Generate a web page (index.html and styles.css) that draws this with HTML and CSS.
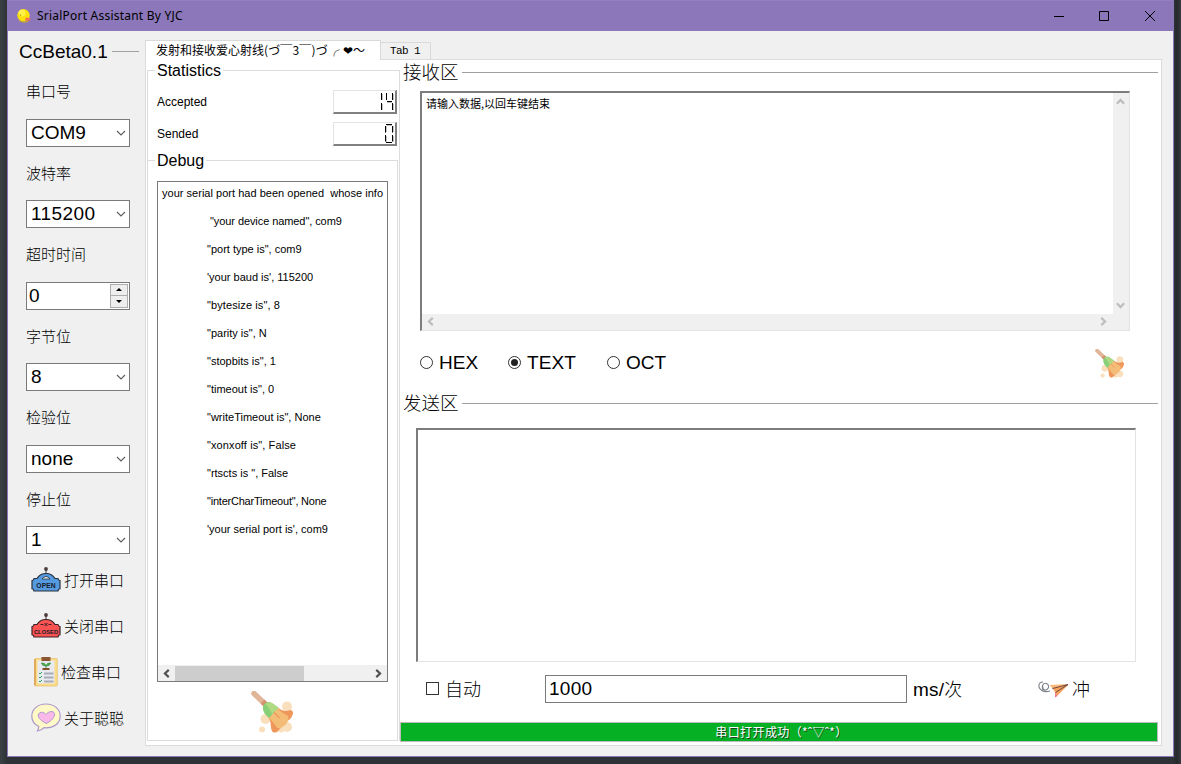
FILE: index.html
```html
<!DOCTYPE html>
<html lang="zh-CN">
<head>
<meta charset="utf-8">
<title>SrialPort Assistant By YJC</title>
<link rel="stylesheet" href="styles.css">
</head>
<body>
<svg width="0" height="0" class="defs" aria-hidden="true">
  <symbol id="chev" viewBox="0 0 10 6"><path d="M1 1l4 4 4-4" fill="none" stroke="#5c5c5c" stroke-width="1.1"/></symbol>
  <symbol id="arrow" viewBox="0 0 8 8"><path d="M6 .8L2.6 4 6 7.2" fill="none" stroke="currentColor" stroke-width="1.9"/></symbol>
  <symbol id="broom" viewBox="0 0 42 42">
    <circle cx="36" cy="15.500" r="5" fill="#fadfbd"/><circle cx="14.500" cy="28" r="5" fill="#fadfbd"/>
    <circle cx="11" cy="38.500" r="3" fill="#fadfbd"/><circle cx="36" cy="36" r="5" fill="#fadfbd"/><circle cx="30" cy="38" r="3.500" fill="#fadfbd"/>
    <path d="M3 2.500L14 13" stroke="#e0b598" stroke-width="5.500" stroke-linecap="round"/>
    <path d="M11.500 10.500l3.500 3.500" stroke="#d4946f" stroke-width="5.500"/>
    <path d="M26 16c5 4 9 5 13 3 3 0 4 3 2 6-1 3-3 4-5 5L27 40c-2 2-5 2-6 0-2-4 0-9-4-14z" fill="#ef975b"/>
    <path d="M26 16c3 5 8 7 11 9 1 2 0 5-1 7-2 3-4 3-6 5-2 1-4 0-5-2-3-3-4-6-8-9z" fill="#f3bd78"/>
    <path d="M22 20.500l6.500 6.500" stroke="#ef975b" stroke-width="1.300"/>
    <path d="M12 16c1-4 4-5 7-5l8.500 5.500L18 27c-4-3-6.500-7-6-11z" fill="#88d078"/>
    <path d="M14.500 13c2-2 5-2 7.500-.5l5.500 4.500-6.500 6c-2-4-3-7-6.500-10z" fill="#afd982"/>
  </symbol>
</svg>

<div class="window">
  <header class="titlebar">
    <svg class="app-icon" viewBox="0 0 15 14"><circle cx="6.500" cy="6.300" r="6.200" fill="#fbe009"/><circle cx="5" cy="4" r="3.500" fill="#fff04a"/><circle cx="3.500" cy="6" r=".8" fill="#c8a000"/><path d="M9 8.500l5 1-2 2.500-4-.5z" fill="#f0705c"/><path d="M2 11.500q5 3 9 1" stroke="#c9b51b" fill="none"/></svg>
    <span class="app-title">SrialPort Assistant By YJC</span>
    <div class="win-buttons">
      <svg viewBox="0 0 10 10"><path d="M0 5.500h10" stroke="#000"/></svg>
      <svg viewBox="0 0 10 10"><path d="M.5.5h9v9h-9z" fill="none" stroke="#000"/></svg>
      <svg viewBox="0 0 10 10"><path d="M0 0l10 10M10 0L0 10" stroke="#000"/></svg>
    </div>
  </header>

  <main class="client">
    <aside class="sidebar">
      <div class="side-title"><span>CcBeta0.1</span><i></i></div>
      <div class="settings">
        <label>串口号</label>
        <div class="combo"><span>COM9</span><svg><use href="#chev"/></svg></div>
        <label>波特率</label>
        <div class="combo digits"><span>115200</span><svg><use href="#chev"/></svg></div>
        <label>超时时间</label>
        <div class="combo spin"><span>0</span><div class="spinner"><b class="up"></b><b class="down"></b></div></div>
        <label>字节位</label>
        <div class="combo"><span>8</span><svg><use href="#chev"/></svg></div>
        <label>检验位</label>
        <div class="combo"><span>none</span><svg><use href="#chev"/></svg></div>
        <label>停止位</label>
        <div class="combo"><span>1</span><svg><use href="#chev"/></svg></div>
      </div>
      <nav class="actions">
        <div class="action">
          <svg viewBox="0 0 30 26"><path d="M15 2v6" stroke="#555" stroke-width="1.200"/><circle cx="15" cy="2" r="1.900" fill="#4a3a3a"/><path d="M3 11.500h3C8 8 12 6.500 15 6.500s7 1.500 9 5h3c.2 1.400.8 2 2 2.200v8c-1.200.2-1.800.9-2 2.300H3c-.2-1.400-.8-2.100-2-2.300v-8c1.200-.2 1.800-.8 2-2.200z" fill="#5599de" stroke="#26323f" stroke-width="1.200"/><path d="M11 12q4-5 8 0z" fill="#f0f0f0" stroke="#26323f" stroke-width=".8"/><text x="15" y="21.200" class="sign">OPEN</text></svg>
          <span>打开串口</span>
        </div>
        <div class="action">
          <svg viewBox="0 0 30 26"><path d="M15 2v6" stroke="#555" stroke-width="1.200"/><circle cx="15" cy="2" r="1.900" fill="#4a3a3a"/><path d="M3 11.500h3C8 8 12 6.500 15 6.500s7 1.500 9 5h3c.2 1.400.8 2 2 2.200v8c-1.200.2-1.800.9-2 2.300H3c-.2-1.400-.8-2.100-2-2.300v-8c1.200-.2 1.800-.8 2-2.200z" fill="#fb5252" stroke="#3b2226" stroke-width="1.200"/><path d="M9.500 11.500h3M17.500 11.500h3M13.500 10l3 3M16.500 10l-3 3" stroke="#3b2226" fill="none"/><text x="15" y="21.200" class="sign closed">CLOSED</text></svg>
          <span>关闭串口</span>
        </div>
        <div class="action check">
          <svg viewBox="0 0 24 30"><rect x=".7" y="1.500" width="22.600" height="27.500" rx="1" fill="#fbdd88" stroke="#e2b55a" stroke-width=".6"/><path d="M1 2v26.500" stroke="#d89e4e" stroke-width="1.500"/><rect x="3.500" y="3.500" width="17" height="23" fill="#e9eaf0"/><rect x="7.500" y="0" width="9" height="4" fill="#8c5730"/><path d="M12 13V8.500M12 9Q8 9 7.500 6 11 5.500 12 9q1-3.500 4.500-3Q16 9 12 9z" stroke="#3f9a4c" fill="#58ae50"/><path d="M8.500 12h7" stroke="#83522b" stroke-width="2"/><path d="M10 16.500h9.500M10 20.500h9.500M10 24.500h9.500" stroke="#a9abb8" stroke-width="2.200"/><path d="M5 16l1 1 2-2M5 20l1 1 2-2M5 24l1 1 2-2" stroke="#28a35a" fill="none"/></svg>
          <span>检查串口</span>
        </div>
        <div class="action">
          <svg viewBox="0 0 30 30"><path d="M15 1C7 1 .8 6 .8 13c0 5 2.500 8.500 7 10.500-.2 2-.8 3-1.300 4.500 3-.5 5-1.500 6.500-3.300 9.500.8 16.200-4 16.200-11.700C29.200 6 23 1 15 1z" fill="#fef9c7" stroke="#ab98cb" stroke-width="1.200"/><path d="M15.500 20.500C10 18 7 15 7.300 12c.4-3 5-4 7.700-.5 2.500-3.500 7.500-4 8.500-1 .8 3-3 7.500-8 10z" fill="#f8b9e9" stroke="#a79acc"/></svg>
          <span>关于聪聪</span>
        </div>
      </nav>
    </aside>

    <section class="tabs">
      <div class="tabbar">
        <div class="tab active">发射和接收爱心射线<span class="kao">(づ￣3￣)づ╭ ❤～</span></div>
        <div class="tab second">Tab 1</div>
      </div>
      <div class="pane">
        <fieldset class="stats">
          <legend>Statistics</legend>
          <div class="stat"><span>Accepted</span>
            <div class="lcd"><svg viewBox="0 0 61 21"><path d="M48.500 3v6M48.500 13v6M59.500 3v6M59.500 13v6M53 11.500h5" stroke="#c4c4c4"/><path d="M47.500 2v7M47.500 12v7M52.500 2v7M58.500 2v7M53 10.500h5M58.500 12v7" stroke="#000"/></svg></div></div>
          <div class="stat"><span>Sended</span>
            <div class="lcd"><svg viewBox="0 0 61 21"><path d="M52.500 3v6M52.500 13v6M59.500 3v6M59.500 13v6M53 2.500h5" stroke="#c4c4c4"/><path d="M52 1.500h6M52 19.500h6M51.500 3v6.500M58.500 3v6.500M51.500 12v6.500M58.500 12v6.500" stroke="#000"/></svg></div></div>
          <fieldset class="debug">
            <legend>Debug</legend>
            <div class="log">
              <ul>
                <li class="head">your serial port had been opened&nbsp; whose info</li>
                <li class="first">"your device named", com9</li>
                <li>"port type is", com9</li>
                <li>'your baud is', 115200</li>
                <li class="wide">"bytesize is", 8</li>
                <li>"parity is", N</li>
                <li>"stopbits is", 1</li>
                <li>"timeout is", 0</li>
                <li>"writeTimeout is", None</li>
                <li class="wide">"xonxoff is", False</li>
                <li>"rtscts is ", False</li>
                <li class="tight">"interCharTimeout", None</li>
                <li>'your serial port is', com9</li>
              </ul>
              <div class="hscroll"><svg><use href="#arrow"/></svg><i class="thumb"></i><svg class="right"><use href="#arrow"/></svg></div>
            </div>
            <svg class="broom-big"><use href="#broom"/></svg>
          </fieldset>
        </fieldset>

        <div class="right-col">
          <div class="group-title"><span>接收区</span><i></i></div>
          <div class="textbox receive">
            <div class="content">请输入数据,以回车键结束</div>
            <div class="vbar"><svg class="up"><use href="#arrow"/></svg><svg class="down"><use href="#arrow"/></svg></div>
            <div class="hbar"><svg><use href="#arrow"/></svg><svg class="right"><use href="#arrow"/></svg></div>
            <div class="corner"></div>
          </div>
          <div class="radios">
            <div class="radio"><i></i>HEX</div>
            <div class="radio on"><i></i>TEXT</div>
            <div class="radio"><i></i>OCT</div>
            <svg class="broom-small"><use href="#broom"/></svg>
          </div>
          <div class="group-title send-title"><span>发送区</span><i></i></div>
          <div class="textbox send"></div>
          <div class="send-row">
            <i class="checkbox"></i><span class="auto">自动</span>
            <div class="interval">1000</div>
            <span class="unit">ms/<em>次</em></span>
            <svg class="plane" viewBox="0 0 31 18"><path d="M5 2C0 2-.5 8 4 10.500q3 2 8 .5M5 10C3 5 6 2.500 8.500 3.500s3 4.500.5 6-5-.5-4-3" fill="none" stroke="#7c8088" stroke-width="1.100"/><path d="M12 5l18.500-.5L19 16l-2-4z" fill="#f5a25c"/><path d="M12 5l18-.5L15 8.500z" fill="#fbb878"/><path d="M14.500 8.500L30 4.500 17.500 12.500" fill="none" stroke="#5e3c38" stroke-width=".9"/><path d="M17 12.500l2.500 3.500-2.500 1.500z" fill="#ef7488"/></svg>
            <span class="go">冲</span>
          </div>
          <div class="status">串口打开成功（*ˆ▽ˆ*）</div>
        </div>
      </div>
    </section>
  </main>
</div>
</body>
</html>
```
FILE: styles.css
```css
* { box-sizing: border-box; }
body {
  margin: 0;
  width: 1181px;
  height: 764px;
  overflow: hidden;
  padding-left: 7px;
  background: linear-gradient(90deg, #3a4145 0, #2e3236 7px, #2e3236 1173px, #26292c 1177px, #363a3e 1181px);
  font-family: "Liberation Sans", "Noto Sans CJK SC", sans-serif;
  color: #000;
}
.defs { position: absolute; }
svg { display: block; flex: none; }
i, em { font-style: normal; }

.window {
  width: 1167px;
  height: 757px;
  border: 1px solid #8b78b8;
  border-top: 0;
  background: #f0f0f0;
}
.titlebar {
  display: flex;
  align-items: center;
  height: 31px;
  padding-left: 9px;
  background: #8b77b9;
  border-top: 1px solid #957fc0;
}
.app-icon { width: 15px; height: 14px; }
.app-title {
  margin-left: 5px;
  font: 12px/20px "Noto Sans", "Open Sans", sans-serif;
  letter-spacing: .22px;
  white-space: nowrap;
}
.win-buttons { display: flex; gap: 36px; margin-left: auto; padding-right: 18px; }
.win-buttons svg { width: 10px; height: 10px; }
.win-buttons svg:nth-child(1) { margin-right: -1px; }

.client { display: flex; height: 725px; }

.sidebar { width: 137px; padding: 8px 6px 0 11px; }
.side-title { display: flex; align-items: center; height: 25px; font-size: 19px; }
.side-title i { flex: 1; height: 1px; margin-left: 4px; background: #a0a0a0; }
.settings {
  display: grid;
  grid-template-rows: repeat(6, 53.5px 28px);
  width: 104px;
  margin: 1.250px 0 0 7px;
}
.settings label {
  font: 15px/52px "Noto Sans CJK SC", sans-serif;
  font-weight: 300;
}
.combo {
  display: flex;
  align-items: center;
  justify-content: space-between;
  padding: 0 3px 0 4px;
  background: #fff;
  border: 1px solid #7a7a7a;
  font-size: 19px;
}
.combo svg { width: 10px; height: 6px; }
.digits { letter-spacing: .4px; }
.spin { padding: 0 1px 0 2px; }
.spinner {
  display: grid;
  grid-template-rows: 1fr 1fr;
  width: 18px;
  height: 24px;
  background: #eee;
  border: 1px solid #adadad;
}
.spinner b { display: flex; align-items: center; justify-content: center; }
.spinner .up { border-bottom: 1px solid #adadad; }
.spinner b::after { content: ""; border: 3px solid transparent; border-top-width: 0; border-bottom: 3px solid #000; }
.spinner .down::after { border-bottom: 0; border-top: 3px solid #000; }

.actions { display: grid; grid-template-rows: repeat(4, 46px); margin: 3px 0 0 12px; }
.action {
  display: flex;
  align-items: center;
  gap: 3px;
  font: 15px/20px "Noto Sans CJK SC", sans-serif;
  font-weight: 300;
  white-space: nowrap;
}
.action svg { width: 30px; height: 26px; }
.action:last-child svg { height: 30px; }
.action.check svg { width: 24px; height: 30px; margin-left: 3px; }
.sign { font: 700 6.8px "Liberation Sans", sans-serif; text-anchor: middle; fill: #17202b; }
.closed { font-size: 5.8px; }

.tabs { width: 1017px; padding-top: 9px; }
.tabbar { display: flex; align-items: flex-end; height: 20px; position: relative; margin-bottom: -1px; }
.tab {
  height: 18px;
  border: 1px solid #d9d9d9;
  border-bottom: 0;
  white-space: pre;
  font: 12px/17px "Noto Sans CJK SC", sans-serif;
}
.tab.active { width: 236px; height: 20px; padding-left: 10px; background: #fff; }
.kao { letter-spacing: .15px; }
.tab.second { width: 51px; margin-left: -1px; padding-left: 9px; font: 11px/17px "Liberation Mono", monospace; letter-spacing: -.6px; }
.pane {
  display: flex;
  height: 687px;
  background: #fff;
  border: 1px solid #dcdcdc;
}

fieldset { margin: 0; padding: 0; min-width: 0; border: 1px solid #dcdcdc; }
legend { height: 21px; margin-left: 7px; padding: 0 2px; font-size: 16px; line-height: 21px; }
.stats { width: 253px; height: 681px; margin-left: 1px; border-bottom: 0; }
.stat {
  display: flex;
  align-items: center;
  justify-content: space-between;
  height: 24px;
  margin: 8px 2px 0 9px;
  font-size: 12px;
}
.stat:first-of-type { margin-top: 9px; }
.lcd {
  width: 64px;
  height: 24px;
  border: 1px solid #e3e3e3;
  border-right: 2px solid #808080;
  border-bottom: 2px solid #808080;
}
.lcd svg { width: 61px; height: 21px; }
.debug { width: 251px; height: 591px; margin: 4px 0 0 -1px; }
.log {
  display: flex;
  flex-direction: column;
  justify-content: space-between;
  width: 231px;
  height: 501px;
  margin: 10px 0 0 9px;
  border: 1px solid #7a7a7a;
}
.log ul { margin: -3px 0 0; padding: 0; list-style: none; font-size: 11px; line-height: 28px; }
.log li { height: 28px; padding-left: 49px; white-space: nowrap; }
.log .head { padding-left: 4px; letter-spacing: .02px; }
.log .first { padding-left: 52px; letter-spacing: -.08px; }
.log .wide { letter-spacing: .1px; }
.log .tight { letter-spacing: -.22px; }
.hscroll { display: flex; align-items: center; height: 16px; padding: 0 4px; background: #f0f0f0; color: #505050; }
.hscroll svg { width: 9px; height: 9px; }
.hscroll .thumb { width: 129px; height: 15px; margin-left: 4px; background: #cdcdcd; }
.right { transform: scaleX(-1); }
.hscroll .right { margin-left: auto; }
.broom-big { width: 42px; height: 42px; margin: 9px 0 0 103px; }

.right-col { width: 758px; }
.group-title { display: flex; align-items: center; height: 25px; padding-left: 3px; }
.group-title span { font: 18.5px/25px "Noto Sans CJK SC", sans-serif; font-weight: 300; margin-top: -3px; }
.group-title i { flex: 1; height: 1px; margin-left: 3px; background: #a0a0a0; }
.textbox {
  border: 1px solid #e3e3e3;
  border-top: 2px solid #7c7c7c;
  border-left: 2px solid #7c7c7c;
  background: #fff;
}
.receive {
  display: grid;
  grid-template: 1fr 16px / 1fr 16px;
  width: 710px;
  height: 240px;
  margin: 6px 0 0 20px;
  color: #bdbdbd;
}
.content { padding: 0 0 0 4px; color: #000; font: 11px/20px "Noto Sans CJK SC", sans-serif; }
.vbar, .hbar { display: flex; justify-content: space-between; align-items: center; background: #f0f0f0; padding: 4px 5px 4px 3px; }
.vbar .up { transform: rotate(90deg); }
.vbar .down { transform: rotate(-90deg); }
.vbar { flex-direction: column; }
.vbar svg, .hbar svg { width: 9px; height: 9px; }
.hbar { padding: 2px 5px 4px 4px; }
.corner { background: #f0f0f0; }
.radios { display: flex; align-items: center; height: 30px; margin: 17px 0 0 20px; font-size: 19px; }
.radio { display: flex; align-items: center; margin-right: 30px; }
.radio.on { margin-right: 31px; letter-spacing: .1px; }
.radio i {
  display: flex;
  align-items: center;
  justify-content: center;
  width: 13px;
  height: 13px;
  margin: -1px 6px 0 0;
  border: 1px solid #333;
  border-radius: 50%;
}
.radio.on i::after { content: ""; width: 7px; height: 7px; border-radius: 50%; background: #222; }
.broom-small { width: 29px; height: 29px; margin-left: auto; margin-right: 34px; }
.send-title { margin-top: 13px; }
.send { width: 720px; height: 234px; margin: 12px 0 0 16px; }
.send-row { display: flex; align-items: center; height: 28px; margin: 13px 0 0 26px; font-size: 19px; }
.checkbox { width: 13px; height: 13px; margin-top: -1px; border: 1px solid #333; }
.auto { width: 100px; margin-left: 6px; }
.auto, .unit em, .go { font: 18px/26px "Noto Sans CJK SC", sans-serif; font-weight: 300; }
.auto, .unit, .go { margin-top: -2px; }
.interval {
  width: 362px;
  height: 28px;
  padding-left: 3px;
  border: 1px solid #7a7a7a;
  line-height: 26px;
  letter-spacing: .3px;
}
.unit { width: 125px; margin-left: 6px; letter-spacing: .2px; }
.plane { width: 31px; height: 18px; }
.go { margin-left: 3px; }
.status {
  height: 20px;
  margin-top: 19px;
  padding-left: 5px;
  border: 1px solid #bcbcbc;
  background: #06b025;
  color: #fff;
  text-align: center;
  white-space: nowrap;
  font: 12px/18px "Noto Sans CJK SC", sans-serif;
  letter-spacing: .4px;
  text-shadow: 1px 1px 0 #17451f;
}
```
